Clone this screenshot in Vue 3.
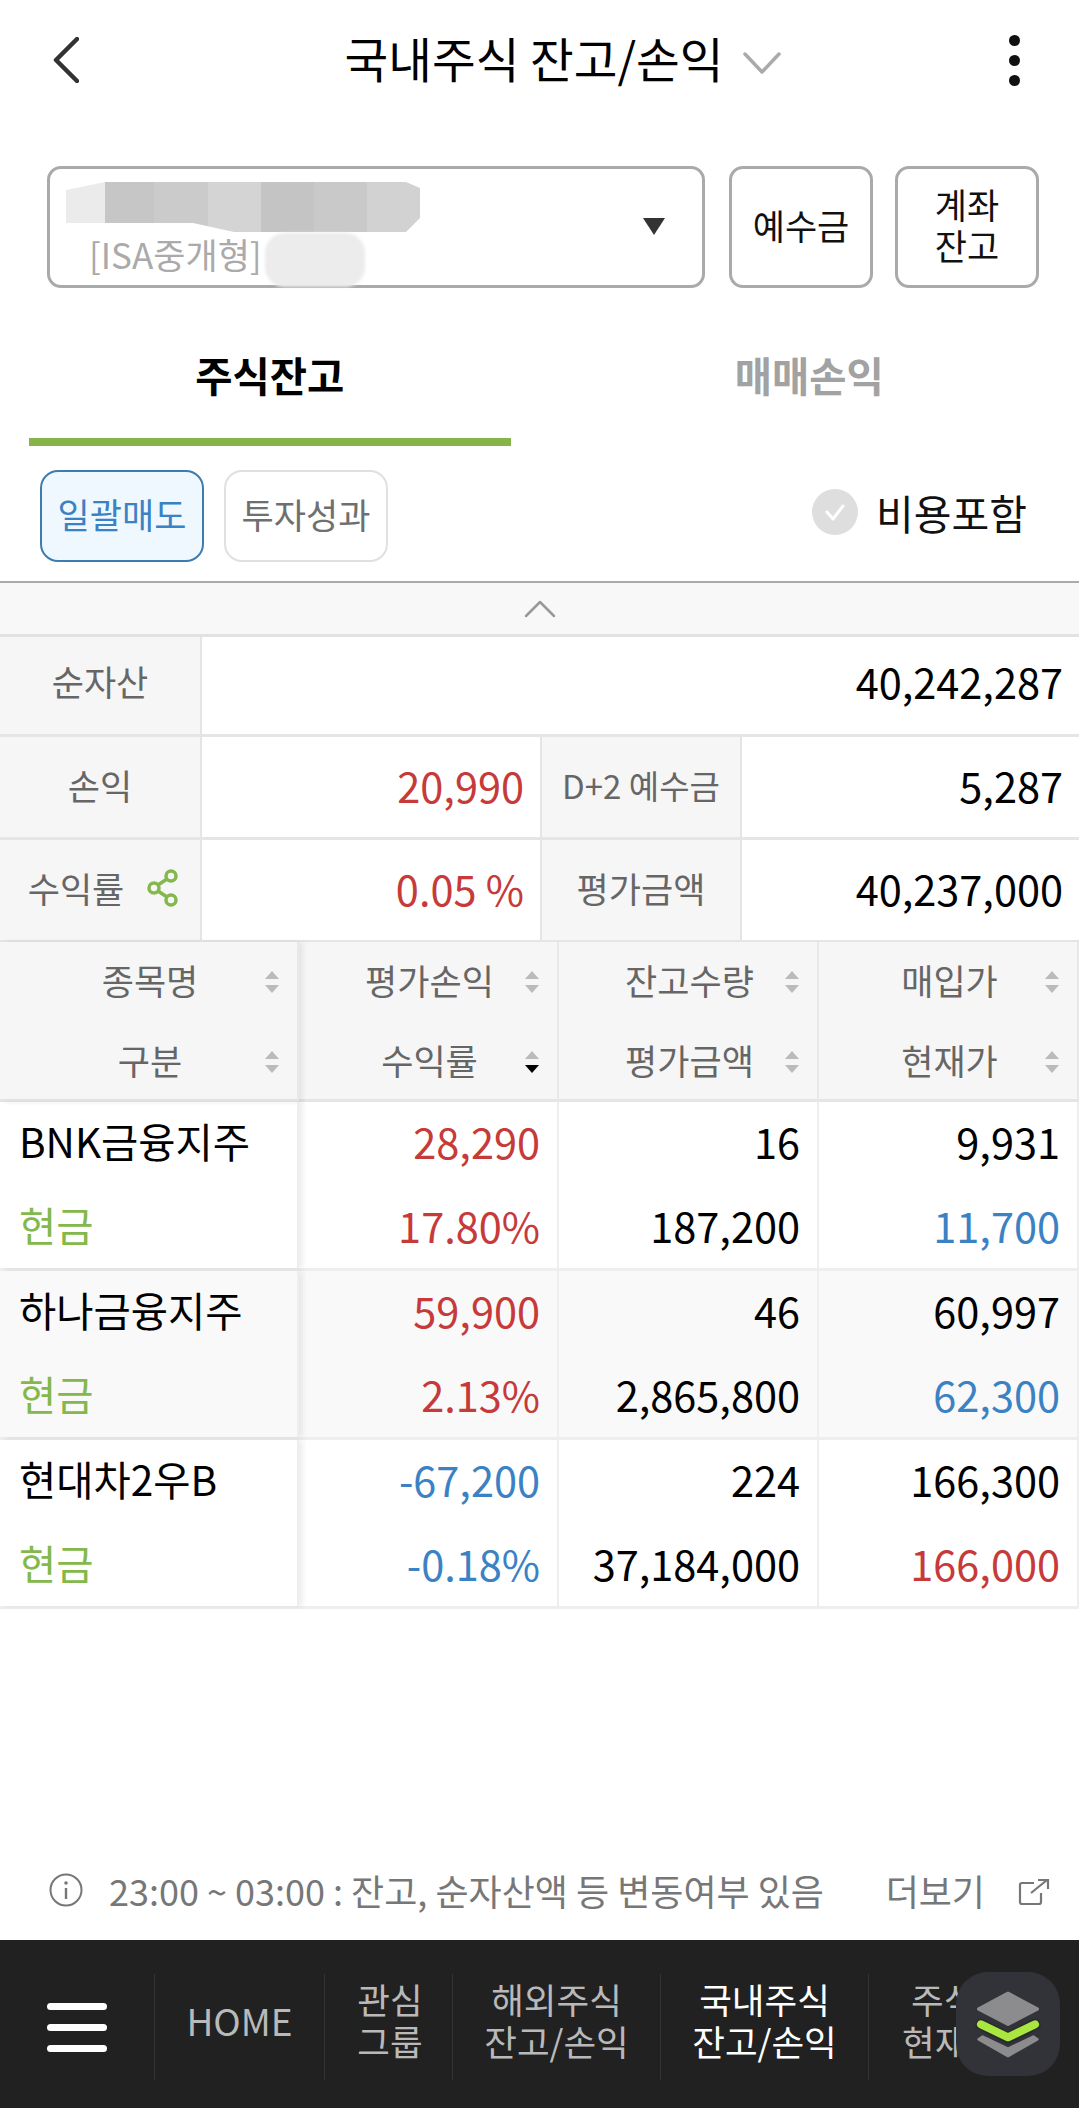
<script setup>
import { ref } from 'vue'

const activeTab = ref(0)
const includeCost = ref(false)

const headCols = [
  { top: '종목명', bottom: '구분' },
  { top: '평가손익', bottom: '수익률', active: true },
  { top: '잔고수량', bottom: '평가금액' },
  { top: '매입가', bottom: '현재가' }
]

const rows = [
  {
    name: 'BNK금융지주',
    pl: '28,290', rate: '17.80%', tone: 'red',
    qty: '16', evalAmt: '187,200',
    buy: '9,931', cur: '11,700', curTone: 'blue'
  },
  {
    name: '하나금융지주',
    pl: '59,900', rate: '2.13%', tone: 'red',
    qty: '46', evalAmt: '2,865,800',
    buy: '60,997', cur: '62,300', curTone: 'blue'
  },
  {
    name: '현대차2우B',
    pl: '-67,200', rate: '-0.18%', tone: 'blue',
    qty: '224', evalAmt: '37,184,000',
    buy: '166,300', cur: '166,000', curTone: 'red'
  }
]
</script>

<template>
  <div class="page">
    <header class="top">
      <svg class="back" width="26" height="46" viewBox="0 0 26 46">
        <path d="M24 2 L3 23 L24 44" fill="none" stroke="#333" stroke-width="4.5" stroke-linecap="round" stroke-linejoin="round" />
      </svg>
      <div class="title">
        <span>국내주식 잔고/손익</span>
        <svg width="38" height="22" viewBox="0 0 38 22">
          <path d="M2 2 L19 20 L36 2" fill="none" stroke="#aaa" stroke-width="3.5" stroke-linecap="round" stroke-linejoin="round" />
        </svg>
      </div>
      <div class="more"><i></i><i></i><i></i></div>
    </header>

    <section class="account">
      <div class="select">
        <div class="blur-a"></div>
        <div class="blur-b"></div>
        <span class="acct-type">[ISA중개형]</span>
        <span class="caret"></span>
      </div>
      <button class="acct-btn">예수금</button>
      <button class="acct-btn">계좌<br>잔고</button>
    </section>

    <nav class="tabs">
      <a class="tab" :class="{ on: activeTab === 0 }" @click="activeTab = 0">주식잔고</a>
      <a class="tab" :class="{ on: activeTab === 1 }" @click="activeTab = 1">매매손익</a>
    </nav>

    <section class="tools">
      <button class="tool primary">일괄매도</button>
      <button class="tool">투자성과</button>
      <label class="cost" @click="includeCost = !includeCost">
        <svg width="46" height="46" viewBox="0 0 46 46">
          <circle cx="23" cy="23" r="23" fill="#dedede" />
          <path d="M15 23 L21 30 L31 17" fill="none" stroke="#fff" stroke-width="3" stroke-linecap="round" stroke-linejoin="round" />
        </svg>
        <span>비용포함</span>
      </label>
    </section>

    <div class="collapse">
      <svg width="32" height="18" viewBox="0 0 32 18">
        <path d="M2 16 L16 2 L30 16" fill="none" stroke="#999" stroke-width="2.5" stroke-linecap="round" stroke-linejoin="round" />
      </svg>
    </div>

    <section class="summary">
      <div class="sum-row r1">
        <div class="label first shift">순자산</div>
        <div class="value shift">40,242,287</div>
      </div>
      <div class="sum-row r2">
        <div class="label first">손익</div>
        <div class="value half red">20,990</div>
        <div class="label mid small">D+2 예수금</div>
        <div class="value">5,287</div>
      </div>
      <div class="sum-row r3">
        <div class="label first rate">
          수익률
          <svg class="share" width="34" height="38" viewBox="0 0 34 38">
            <g fill="none" stroke="#84b84c" stroke-width="3.5">
              <circle cx="25" cy="7" r="5" />
              <circle cx="8" cy="19" r="5" />
              <circle cx="25" cy="31" r="5" />
              <path d="M12 16 L21 10 M12 22 L21 28" />
            </g>
          </svg>
        </div>
        <div class="value half red">0.05 %</div>
        <div class="label mid">평가금액</div>
        <div class="value">40,237,000</div>
      </div>
    </section>

    <section class="grid">
      <div class="grid-head">
        <div v-for="(col, i) in headCols" :key="i" class="hcell" :class="{ frozen: i === 0 }">
          <div class="hline">
            <span>{{ col.top }}</span>
            <svg class="sort" width="16" height="22" viewBox="0 0 16 22">
              <path d="M8 0 L15 8 L1 8 Z M1 14 L15 14 L8 22 Z" fill="#bbb" />
            </svg>
          </div>
          <div class="hline">
            <span>{{ col.bottom }}</span>
            <svg class="sort" width="16" height="22" viewBox="0 0 16 22">
              <path d="M8 0 L15 8 L1 8 Z" fill="#bbb" />
              <path d="M1 14 L15 14 L8 22 Z" :fill="col.active ? '#000' : '#bbb'" />
            </svg>
          </div>
        </div>
      </div>
      <div v-for="(row, i) in rows" :key="row.name" class="grid-row" :class="{ alt: i === 1 }">
        <div class="cell frozen left">
          <div>{{ row.name }}</div>
          <div class="green">현금</div>
        </div>
        <div class="cell" :class="row.tone">
          <div>{{ row.pl }}</div>
          <div>{{ row.rate }}</div>
        </div>
        <div class="cell">
          <div>{{ row.qty }}</div>
          <div>{{ row.evalAmt }}</div>
        </div>
        <div class="cell">
          <div>{{ row.buy }}</div>
          <div :class="row.curTone">{{ row.cur }}</div>
        </div>
      </div>
    </section>

    <div class="spacer"></div>

    <footer class="note">
      <svg width="34" height="34" viewBox="0 0 34 34">
        <circle cx="17" cy="17" r="15.5" fill="none" stroke="#777" stroke-width="2" />
        <circle cx="17" cy="10" r="1.8" fill="#777" />
        <path d="M17 15 V26" stroke="#777" stroke-width="2.4" />
      </svg>
      <span class="note-text">23:00 ~ 03:00 : 잔고, 순자산액 등 변동여부 있음</span>
      <span class="note-more">더보기</span>
      <svg class="ext" width="32" height="28" viewBox="0 0 32 28">
        <path d="M16 5 H4 Q2 5 2 7 V24 Q2 26 4 26 H21 Q23 26 23 24 V15" fill="none" stroke="#777" stroke-width="2.2" />
        <path d="M13 15 L29 2 M20 2 H30 V11" fill="none" stroke="#777" stroke-width="2.2" />
      </svg>
    </footer>

    <div class="bottom">
      <div class="burger"><i></i><i></i><i></i></div>
      <a class="item home">HOME</a>
      <a class="item w1">관심<br>그룹</a>
      <a class="item w2">해외주식<br>잔고/손익</a>
      <a class="item w2 current">국내주식<br>잔고/손익</a>
      <a class="item last"><span>주식</span>현재가</a>
      <div class="fab">
        <svg width="104" height="104" viewBox="228 96 312 312">
          <path d="M384 160 L472 207 L384 253 L296 207 Z" fill="#8c8c8e" stroke="#8c8c8e" stroke-width="10" stroke-linejoin="round" />
          <path d="M296 298 L308 290 L384 326 L460 290 L472 298 L384 348 Z" fill="#8c8c8e" stroke="#8c8c8e" stroke-width="8" stroke-linejoin="round" />
          <path d="M303 253 L384 294 L465 253" fill="none" stroke="#2a2b2e" stroke-width="34" stroke-linecap="round" stroke-linejoin="round" />
          <path d="M303 253 L384 292 L465 253" fill="none" stroke="#a9e63f" stroke-width="24" stroke-linecap="round" stroke-linejoin="round" />
        </svg>
      </div>
    </div>
  </div>
</template>

<style>
html, body {
  margin: 0;
  background: #fff;
}
</style>

<style scoped>
.page {
  display: flex;
  flex-direction: column;
  width: 1079px;
  height: 2108px;
  overflow: hidden;
  background: #fff;
  color: #000;
  font-family: "Noto Sans CJK KR", "Noto Sans", sans-serif;
}

.top {
  display: flex;
  align-items: center;
  justify-content: space-between;
  height: 120px;
  padding: 0 59px 0 53px;
  flex-shrink: 0;
}

.title {
  display: flex;
  align-items: center;
  gap: 20px;
  margin-left: 38px;
  padding-bottom: 4px;
  font-size: 47.5px;
  line-height: 60px;
}

.title svg {
  margin-top: 10px;
}

.more {
  display: flex;
  flex-direction: column;
  gap: 9px;
}

.more i {
  width: 11px;
  height: 11px;
  border-radius: 50%;
  background: #111;
}

.account {
  display: flex;
  height: 122px;
  margin-top: 46px;
  padding: 0 40px 0 47px;
  flex-shrink: 0;
}

.select {
  position: relative;
  width: 658px;
  border: 3px solid #aaa;
  border-radius: 14px;
  box-sizing: border-box;
}

.blur-a {
  position: absolute;
  left: 16px;
  top: 13px;
  width: 354px;
  height: 52px;
  background: linear-gradient(90deg, #ebebeb 0 11%, #c6c6c6 11% 25%, #cbcbcb 25% 40%, #d4d4d4 40% 55%, #c4c4c4 55% 70%, #c9c9c9 70% 85%, #d2d2d2 85% 100%);
  clip-path: polygon(0 8px, 39px 0, 340px 0, 354px 6px, 354px 36px, 340px 50px, 168px 50px, 127px 41px, 0 41px);
}

.blur-b {
  position: absolute;
  left: 215px;
  top: 64px;
  width: 100px;
  height: 54px;
  border-radius: 20px;
  background: #ececec;
  filter: blur(1.5px);
}

.acct-type {
  position: absolute;
  left: 39px;
  top: 62px;
  font-size: 35px;
  line-height: 46px;
  color: #aaa;
}

.caret {
  position: absolute;
  left: 593px;
  top: 49px;
  border-left: 11px solid transparent;
  border-right: 11px solid transparent;
  border-top: 17px solid #333;
}

.acct-btn {
  width: 144px;
  margin-left: 24px;
  padding: 0 0 6px;
  background: #fff;
  border: 3px solid #aaa;
  border-radius: 14px;
  color: #111;
  font-family: inherit;
  font-size: 35px;
  line-height: 41px;
}

.acct-btn:last-child {
  margin-left: 22px;
}

.tabs {
  display: flex;
  height: 158px;
  flex-shrink: 0;
}

.tab {
  display: flex;
  align-items: center;
  justify-content: center;
  width: 50%;
  margin: 0 29px;
  padding-top: 22px;
  box-sizing: border-box;
  border-bottom: 8px solid transparent;
  color: #a2a2a2;
  font-size: 40.5px;
  font-weight: 700;
  cursor: pointer;
}

.tab.on {
  border-bottom-color: #87b34b;
  color: #000;
}

.tools {
  display: flex;
  align-items: flex-start;
  height: 135px;
  padding: 24px 52px 0 40px;
  box-sizing: border-box;
  flex-shrink: 0;
}

.tool {
  width: 164px;
  height: 92px;
  margin-right: 20px;
  padding: 0 0 5px;
  background: #fff;
  border: 2px solid #e0e0e0;
  border-radius: 18px;
  color: #6f6f6f;
  font-family: inherit;
  font-size: 35px;
}

.tool.primary {
  background: #f0f8ff;
  border-color: #3f7cae;
  color: #3b82c4;
}

.cost {
  display: flex;
  align-items: center;
  gap: 18px;
  height: 84px;
  margin-left: auto;
  font-size: 41px;
  color: #111;
}

.collapse {
  display: flex;
  align-items: center;
  justify-content: center;
  height: 56px;
  box-sizing: border-box;
  background: #f8f8f8;
  border-top: 2px solid #aaa;
  border-bottom: 3px solid #e2e2e2;
  flex-shrink: 0;
}

.summary {
  flex-shrink: 0;
}

.sum-row {
  display: grid;
  grid-template-columns: 202px 338px 202px 337px;
  box-sizing: border-box;
  border-bottom: 3px solid #e5e5e5;
}

.r1 {
  grid-template-columns: 202px 877px;
  height: 100px;
}

.r2 {
  height: 103px;
}

.r3 {
  height: 102px;
  border-bottom-width: 2px;
}

.label {
  display: flex;
  align-items: center;
  justify-content: center;
  padding-bottom: 5px;
  background: #f6f6f6;
  color: #666;
  font-size: 35px;
  border-right: 2px solid #e5e5e5;
}

.label.rate {
  padding-left: 8px;
}

.label.small {
  font-size: 33px;
  white-space: nowrap;
}

.label.mid {
  border-left: 2px solid #e5e5e5;
}

.share {
  margin-left: 22px;
}

.value {
  display: flex;
  align-items: center;
  justify-content: flex-end;
  padding-right: 16px;
  padding-bottom: 5px;
  font-size: 41.5px;
}

.label.shift,
.value.shift {
  padding-bottom: 10px;
}

.grid {
  flex-shrink: 0;
}

.grid-head,
.grid-row {
  display: grid;
  grid-template-columns: 299px 260px 260px 260px;
}

.grid-head {
  height: 160px;
  box-sizing: border-box;
  background: #f6f6f6;
  border-bottom: 3px solid #e5e5e5;
}

.hcell {
  border-right: 2px solid #e8e8e8;
}

.hline {
  position: relative;
  display: flex;
  align-items: center;
  justify-content: center;
  height: 80px;
  padding: 0 0 5px 3px;
  box-sizing: border-box;
  color: #666;
  font-size: 35px;
}

.sort {
  position: absolute;
  right: 17px;
  top: 29px;
}

.grid-row {
  height: 169px;
  box-sizing: border-box;
  border-bottom: 3px solid #eee;
}

.grid-row.alt {
  background: #f9f9f9;
}

.cell {
  padding-right: 17px;
  text-align: right;
  border-right: 2px solid #eee;
  font-size: 41.5px;
  line-height: 84px;
  white-space: nowrap;
}

.cell div:first-child {
  margin-top: -3px;
}

.cell.left {
  padding: 0 0 0 19px;
  text-align: left;
  font-size: 40.5px;
}

.frozen {
  position: relative;
  z-index: 1;
  box-shadow: 4px 0 5px rgba(0, 0, 0, 0.07);
}

.red {
  color: #c63a3a;
}

.blue {
  color: #3b82c4;
}

.green {
  color: #84b84c;
}

.spacer {
  flex: 1;
}

.note {
  display: flex;
  align-items: center;
  height: 98px;
  padding: 0 29px 2px 49px;
  box-sizing: border-box;
  flex-shrink: 0;
  color: #777;
  font-size: 36px;
}

.note-text {
  margin-left: 26px;
  white-space: nowrap;
}

.note-more {
  margin-left: auto;
  margin-right: 33px;
}

.ext {
  margin-top: 4px;
}

.bottom {
  position: relative;
  display: flex;
  align-items: center;
  height: 168px;
  background: #212121;
  color: #b9b9b9;
  font-size: 35.5px;
  line-height: 42px;
  flex-shrink: 0;
  overflow: hidden;
}

.burger {
  display: flex;
  flex-direction: column;
  gap: 14px;
  width: 60px;
  padding: 0 47px;
  margin-top: 6px;
}

.burger i {
  height: 7px;
  border-radius: 4px;
  background: #fff;
}

.item {
  display: block;
  height: 106px;
  margin-top: 6px;
  padding-top: 4px;
  box-sizing: border-box;
  border-left: 1px solid #343434;
  text-align: center;
  white-space: nowrap;
}

.home {
  width: 170px;
  padding-top: 1px;
  line-height: 90px;
  font-size: 37px;
}

.w1 {
  width: 128px;
  padding-left: 3px;
}

.w2 {
  width: 208px;
}

.current {
  color: #fff;
}

.last {
  width: 210px;
  padding-left: 33px;
  text-align: left;
}

.last span {
  display: block;
  padding-left: 9px;
}

.fab {
  position: absolute;
  left: 956px;
  top: 32px;
  display: flex;
  width: 104px;
  height: 104px;
  border-radius: 32px;
  background: #323338;
}
</style>
